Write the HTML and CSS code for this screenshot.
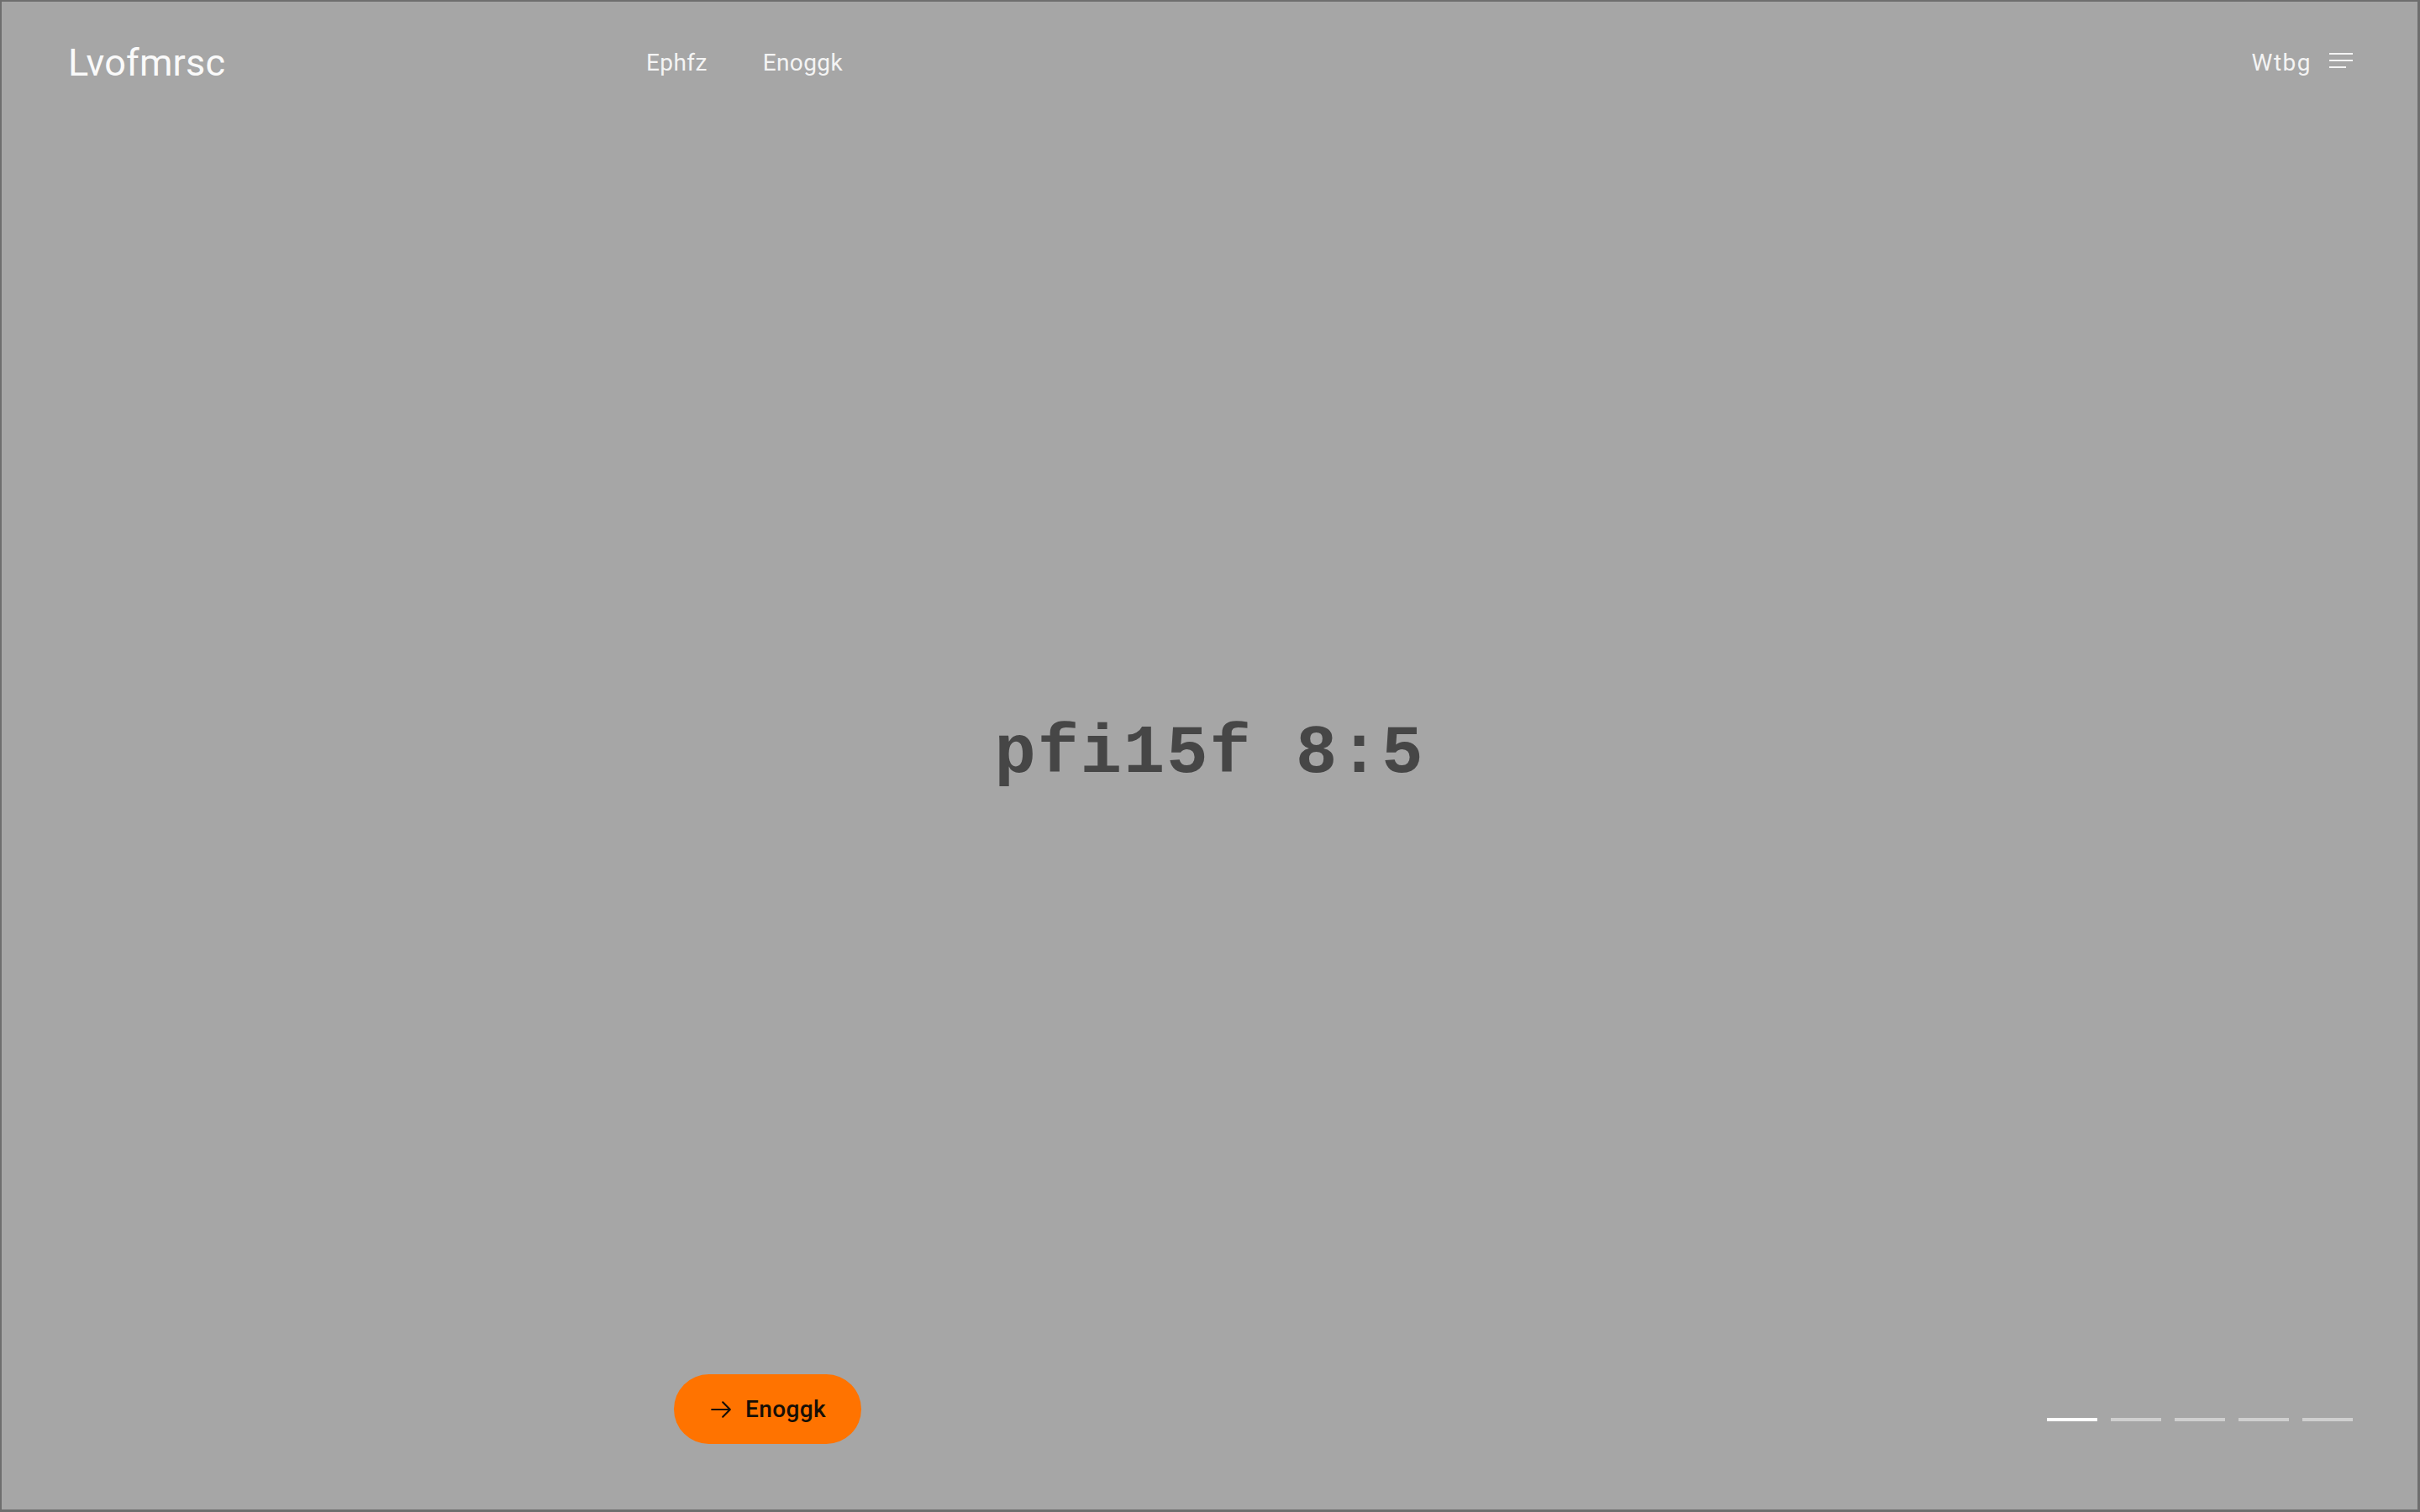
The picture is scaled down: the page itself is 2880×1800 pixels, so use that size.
FILE: index.html
```html
<!DOCTYPE html>
<html lang="en">
<head>
<meta charset="utf-8">
<title>Lvofmrsc</title>
<link rel="stylesheet" href="styles.css">
</head>
<body>
<div class="frame">
  <header class="header">
    <div class="logo">Lvofmrsc</div>
    <nav class="nav">
      <a class="nav-link" href="#">Ephfz</a>
      <a class="nav-link" href="#">Enoggk</a>
    </nav>
    <div class="menu">
      <span class="menu-label">Wtbg</span>
      <span class="burger"><span class="bar"></span><span class="bar"></span><span class="bar bar-short"></span></span>
    </div>
  </header>
  <main class="stage">
    <div class="ratio">pfi15f 8:5</div>
  </main>
  <footer class="footer">
    <a class="cta" href="#">
      <svg class="cta-icon" viewBox="0 0 24 24" width="26" height="26" fill="none" stroke="currentColor" stroke-width="2" stroke-linecap="round" stroke-linejoin="round"><path d="M2 12h20M14 4l8 8-8 8"/></svg>
      <span>Enoggk</span>
    </a>
    <div class="dashes">
      <span class="dash dash-active"></span>
      <span class="dash"></span>
      <span class="dash"></span>
      <span class="dash"></span>
      <span class="dash"></span>
    </div>
  </footer>
</div>
</body>
</html>
```

FILE: styles.css
```css
* { box-sizing: border-box; }
html, body { margin: 0; padding: 0; }
body {
  width: 2880px;
  height: 1800px;
  overflow: hidden;
  background: #6e6e6e;
  font-family: Roboto, "Liberation Sans", sans-serif;
}
.frame {
  width: 2880px;
  height: 1800px;
  border-style: solid;
  border-color: #6e6e6e;
  border-width: 2px 3px 3px 2px;
  background: #a6a6a6;
  display: flex;
  flex-direction: column;
}
.header {
  height: 144px;
  padding: 0 77px 0 79px;
  display: grid;
  grid-template-columns: 688px 1fr auto;
  align-items: center;
}
.logo {
  color: #fafafa;
  font-size: 45px;
  letter-spacing: 0.2px;
}
.nav {
  display: flex;
  gap: 66px;
}
.nav-link {
  color: #f4f4f4;
  font-size: 28px;
  letter-spacing: 0.4px;
  text-decoration: none;
}
.menu {
  display: flex;
  align-items: center;
  gap: 21px;
  color: #f4f4f4;
  font-size: 28px;
  letter-spacing: 1.5px;
}
.burger {
  display: flex;
  flex-direction: column;
  gap: 6px;
  width: 28px;
  margin-top: -4px;
}
.bar {
  display: block;
  height: 2px;
  width: 28px;
  background: #f4f4f4;
}
.bar-short { width: 20px; }
.stage {
  flex: 1;
  display: flex;
  align-items: center;
  justify-content: center;
  padding: 12px 0 0 0;
}
.ratio {
  font-family: "Liberation Mono", "Courier New", monospace;
  font-size: 82px;
  font-weight: 700;
  color: #464646;
  letter-spacing: 2px;
}
.footer {
  display: grid;
  grid-template-columns: 721px 1fr auto;
  align-items: end;
  padding: 0 77px 78px 79px;
}
.cta {
  grid-column: 2;
  justify-self: start;
  display: flex;
  align-items: center;
  gap: 16px;
  height: 83px;
  padding: 0 42px 0 43px;
  border-radius: 42px;
  background: #ff7300;
  color: #160f06;
  font-size: 28px;
  font-weight: 500;
  letter-spacing: 0.4px;
  text-decoration: none;
}
.cta-icon { display: block; }
.dashes {
  grid-column: 3;
  display: flex;
  gap: 16px;
  margin-bottom: 27px;
}
.dash {
  display: block;
  width: 60px;
  height: 4px;
  background: #cfcfcf;
}
.dash-active { background: #ffffff; }
```
